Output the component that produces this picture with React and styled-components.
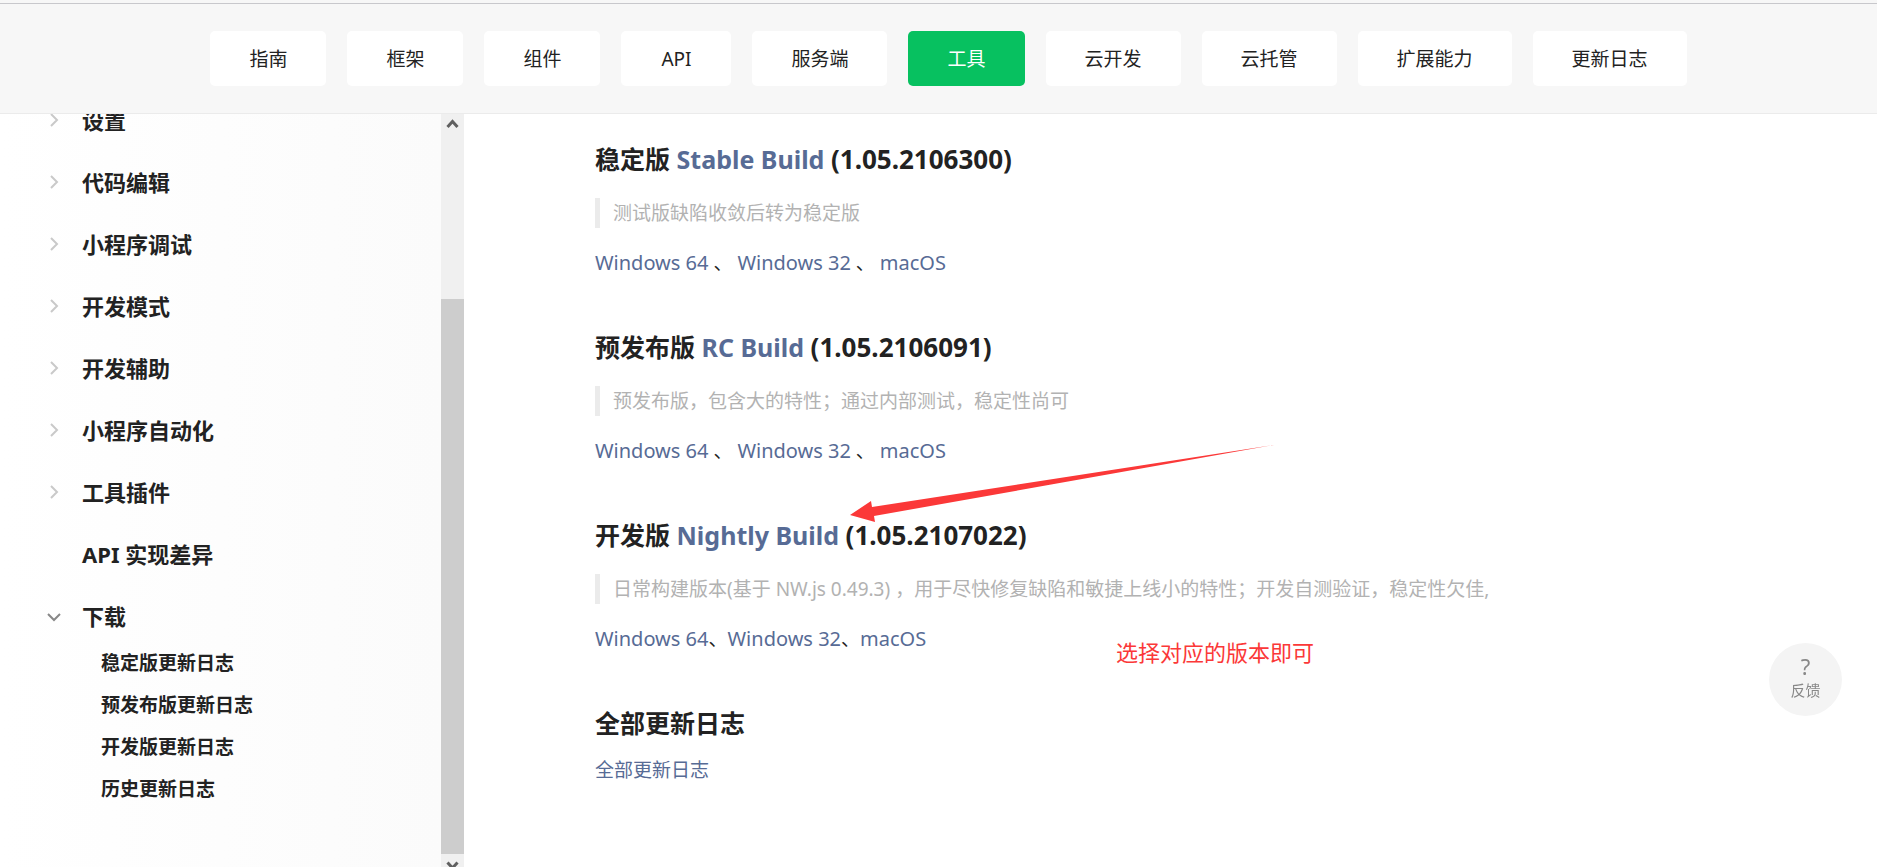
import React from "react";
import styled, { createGlobalStyle } from "styled-components";

const GlobalStyle = createGlobalStyle`
  * { box-sizing: border-box; }
  body {
    margin: 0;
    background: #fff;
    color: #222;
    font: 19px/30px "Noto Sans", "Noto Sans CJK SC", sans-serif;
  }
  a { text-decoration: none; }
  ul { margin: 0; padding: 0; list-style: none; }
`;

const Page = styled.div`
  display: flex;
  flex-direction: column;
  height: 100vh;
  overflow: hidden;
`;

const Header = styled.header`
  flex: none;
  padding-top: 3px;
  background: #f7f7f7;
  border-bottom: 1px solid #ebebeb;
`;

const Nav = styled.nav`
  display: flex;
  justify-content: center;
  gap: 21px;
  padding: 27px 0 27px 20px;
  border-top: 1px solid #c8c8cc;
`;

const NavLink = styled.a`
  min-width: 110px;
  padding: 2px 39px 0;
  border-radius: 5px;
  line-height: 53px;
  text-align: center;
  white-space: nowrap;
  color: ${(p) => (p.$active ? "#fff" : "#222")};
  background: ${(p) => (p.$active ? "#07c160" : "#fff")};
`;

const Body = styled.div`
  display: flex;
  flex: 1;
  min-height: 0;
`;

const Sidebar = styled.aside`
  display: flex;
  flex: none;
  width: 464px;
  overflow: hidden;
`;

const Menu = styled.ul`
  flex: 1;
  margin-top: -25px;
  background: linear-gradient(90deg, #fff, #fbfbfb);
`;

const SubMenu = styled.ul`
  margin-top: -5px;
`;

const Group = styled.button`
  display: flex;
  align-items: center;
  width: 100%;
  height: 62px;
  padding: 0 0 0 44px;
  border: 0;
  background: none;
  color: #222;
  font: bold 22px/30px "Noto Sans", "Noto Sans CJK SC", sans-serif;
  text-align: left;
  cursor: pointer;
`;

const Marker = styled.svg`
  flex: none;
  width: 20px;
  height: 20px;
  margin-right: 18px;
  fill: none;
  stroke: ${(p) => (p.$open ? "#888" : "#c9c9c9")};
  stroke-width: 2;
`;

const SubLink = styled.a`
  display: block;
  padding-left: 101px;
  color: #222;
  font-weight: bold;
  line-height: 42px;
`;

const Scrollbar = styled.div`
  display: flex;
  flex-direction: column;
  flex: none;
  width: 23px;
  margin-bottom: -10px;
  background: #f0f0f0;
`;

const ScrollButton = styled.svg`
  flex: none;
  width: 23px;
  height: 23px;
  fill: none;
  stroke: #606060;
  stroke-width: 3;
`;

const Track = styled.div`
  flex: 162;
`;

const Thumb = styled.div`
  flex: 556;
  background: #cdcdcd;
`;

const Content = styled.main`
  position: relative;
  flex: 1;
  min-width: 0;
  padding: 27px 0 0 131px;
`;

const Release = styled.section`
  margin-bottom: 51px;
`;

const Title = styled.h2`
  margin: 0;
  font-size: 25px;
  line-height: 36px;
`;

const Version = styled.span`
  font-size: 26px;
`;

const Link = styled.a`
  color: #576b95;
`;

const DownloadLink = styled(Link)`
  font-size: 20px;
`;

const Note = styled.blockquote`
  margin: 21px 0 20px;
  padding-left: 13px;
  border-left: 5px solid #ebebeb;
  color: #b2b2b2;
`;

const Downloads = styled.p`
  margin: 0;
  white-space: pre;
`;

const AllLogs = styled.p`
  margin: 14px 0 0;
`;

const Arrow = styled.svg`
  position: absolute;
  left: 386px;
  top: 331px;
  width: 424px;
  height: 78px;
  fill: #fb3838;
  pointer-events: none;
`;

const Callout = styled.div`
  position: absolute;
  left: 652px;
  top: 523px;
  color: #fb3838;
  font-size: 22px;
`;

const Feedback = styled.button`
  position: fixed;
  right: 35px;
  bottom: 151px;
  display: flex;
  flex-direction: column;
  align-items: center;
  justify-content: center;
  width: 73px;
  height: 73px;
  padding: 0 0 6px;
  border: 0;
  border-radius: 50%;
  background: #f4f4f4;
  color: #888;
  font: 15px/22px "Noto Sans", "Noto Sans CJK SC", sans-serif;
  cursor: pointer;
`;

const Mark = styled.span`
  font-size: 22px;
  line-height: 26px;
`;

const navItems = ["指南", "框架", "组件", "API", "服务端", "工具", "云开发", "云托管", "扩展能力", "更新日志"];

const groups = [
  { name: "设置" },
  { name: "代码编辑" },
  { name: "小程序调试" },
  { name: "开发模式" },
  { name: "开发辅助" },
  { name: "小程序自动化" },
  { name: "工具插件" },
  { name: "API 实现差异", leaf: true },
  { name: "下载", children: ["稳定版更新日志", "预发布版更新日志", "开发版更新日志", "历史更新日志"] },
];

const releases = [
  { name: "稳定版", build: "Stable Build", version: "1.05.2106300", note: "测试版缺陷收敛后转为稳定版", separator: " 、 " },
  { name: "预发布版", build: "RC Build", version: "1.05.2106091", note: "预发布版，包含大的特性；通过内部测试，稳定性尚可", separator: " 、 " },
  {
    name: "开发版",
    build: "Nightly Build",
    version: "1.05.2107022",
    note: "日常构建版本(基于 NW.js 0.49.3) ，用于尽快修复缺陷和敏捷上线小的特性；开发自测验证，稳定性欠佳,",
    separator: "、",
  },
];

function MenuGroup({ name, leaf, children }) {
  return (
    <li>
      <Group type="button" aria-expanded={leaf ? undefined : Boolean(children)}>
        <Marker viewBox="0 0 20 20" $open={Boolean(children)} aria-hidden="true">
          {!leaf && <path d={children ? "M4 8l6 6 6-6" : "M7 4l6 6-6 6"} />}
        </Marker>
        {name}
      </Group>
      {children && (
        <SubMenu>
          {children.map((child) => (
            <li key={child}>
              <SubLink href="#">{child}</SubLink>
            </li>
          ))}
        </SubMenu>
      )}
    </li>
  );
}

export default function App() {
  return (
    <Page>
      <GlobalStyle />
      <Header>
        <Nav>
          {navItems.map((item) => (
            <NavLink key={item} href="#" $active={item === "工具"}>
              {item}
            </NavLink>
          ))}
        </Nav>
      </Header>
      <Body>
        <Sidebar>
          <Menu>
            {groups.map((group) => (
              <MenuGroup key={group.name} {...group} />
            ))}
          </Menu>
          <Scrollbar aria-hidden="true">
            <ScrollButton viewBox="0 0 23 23">
              <path d="M6.500 13l5-5.500 5 5.500" />
            </ScrollButton>
            <Track />
            <Thumb />
            <ScrollButton viewBox="0 0 23 23">
              <path d="M6.500 8.500l5 5.500 5-5.500" />
            </ScrollButton>
          </Scrollbar>
        </Sidebar>
        <Content>
          {releases.map((r) => (
            <Release key={r.build}>
              <Title>
                {r.name} <Link href="#">{r.build}</Link> <Version>({r.version})</Version>
              </Title>
              <Note>{r.note}</Note>
              <Downloads>
                <DownloadLink href="#">Windows 64</DownloadLink>
                {r.separator}
                <DownloadLink href="#">Windows 32</DownloadLink>
                {r.separator}
                <DownloadLink href="#">macOS</DownloadLink>
              </Downloads>
            </Release>
          ))}
          <Title>全部更新日志</Title>
          <AllLogs>
            <Link href="#">全部更新日志</Link>
          </AllLogs>
          <Arrow viewBox="0 0 424 78" aria-hidden="true">
            <path d="M0 70L21 56L22 62L424 0L24 71L25 77Z" />
          </Arrow>
          <Callout>选择对应的版本即可</Callout>
        </Content>
      </Body>
      <Feedback type="button">
        <Mark>?</Mark>
        反馈
      </Feedback>
    </Page>
  );
}
